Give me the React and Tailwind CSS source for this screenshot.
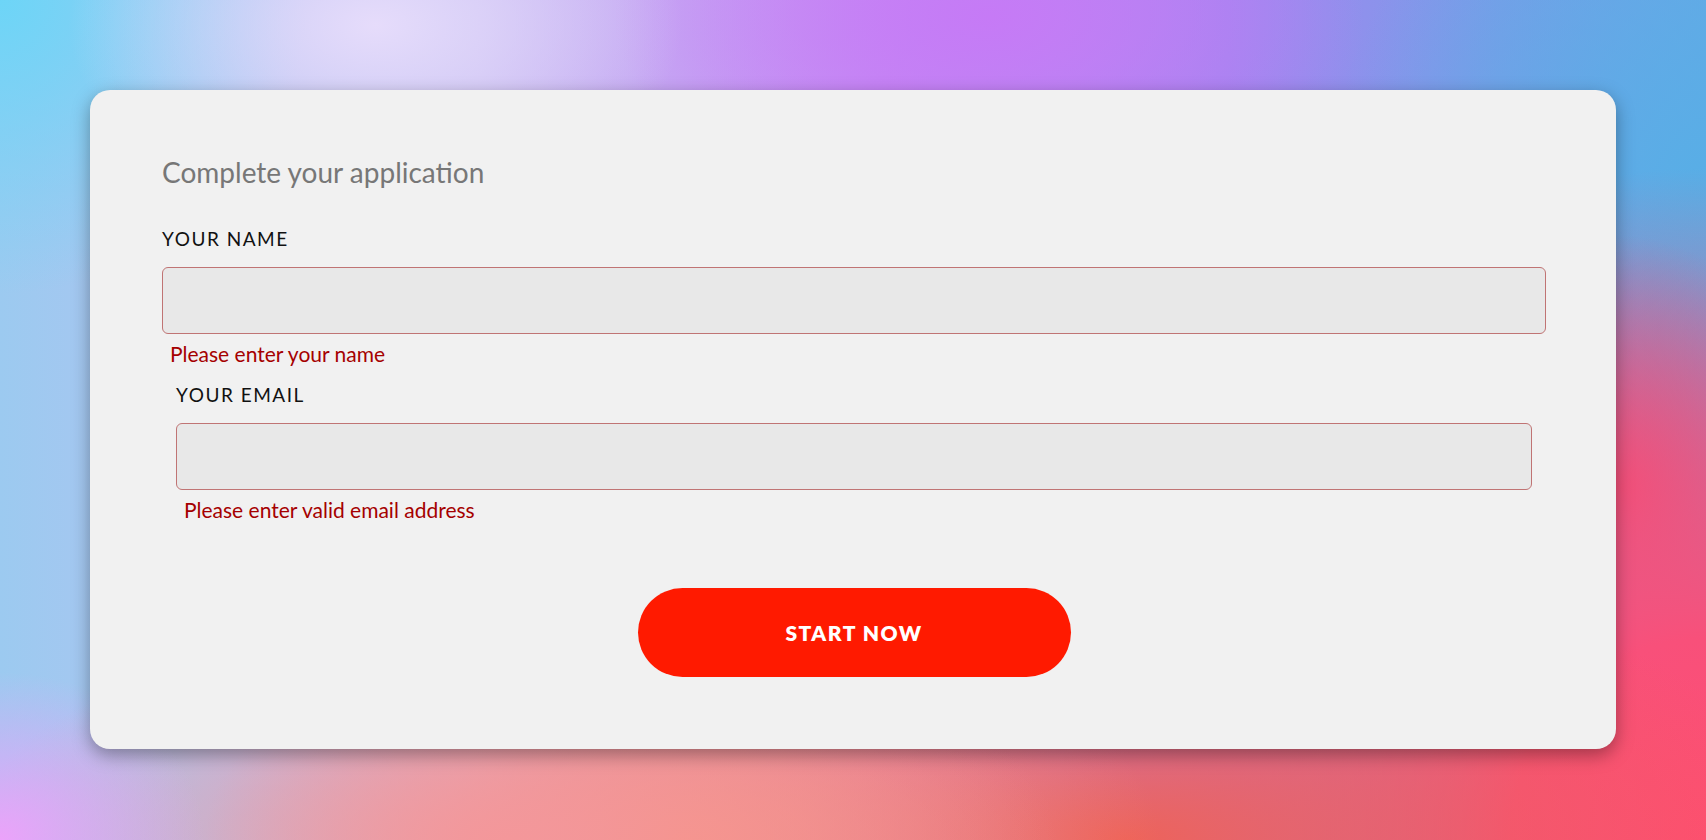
import { useState } from "react";

const Field = ({ label, value, onChange, error, type = "text" }) => {
    return (
        <div className="flex flex-col">
            <label className="text-[19px] leading-[24px] tracking-[0.08em] text-[#111] uppercase">{label}</label>
            <input
                type={type}
                value={value}
                onChange={onChange}
                className="mt-4 h-[67px] w-full rounded-[6px] border border-[#c07474] bg-[#e8e8e8] px-4 text-[20px] outline-none"
            />
            <p className="mt-[7px] pl-2 text-[21px] leading-[26px] text-[#a50000]">{error}</p>
        </div>
    );
};

export default function App() {
    const [name, setName] = useState('');
    const [email, setEmail] = useState('');

    const handleClick = (event) => {
        event.preventDefault();
    };

    return (
        <div className="min-h-screen p-[90px] font-['Lato','Liberation_Sans',sans-serif] bg-[radial-gradient(ellipse_12%_20%_at_0%_100%,#eca2fa_0%,rgba(236,162,250,0)_100%),radial-gradient(ellipse_32%_26%_at_30%_100%,#f4979a_0%,rgba(244,151,154,0)_100%),radial-gradient(ellipse_28%_28%_at_40%_100%,#f8907a_0%,rgba(248,144,122,0)_100%),radial-gradient(ellipse_40%_34%_at_66%_100%,#ee6258_0%,rgba(238,98,88,0)_100%),radial-gradient(ellipse_38%_80%_at_100%_100%,#ff4d72_0%,#f8507a_30%,rgba(248,80,122,0)_100%),radial-gradient(ellipse_12%_30%_at_95%_58%,#e84e78_0%,rgba(232,78,120,0)_100%),radial-gradient(ellipse_18%_22%_at_22%_3%,#e6dcfb_0%,rgba(230,220,251,0)_100%),radial-gradient(ellipse_22%_24%_at_58%_2%,#c67af6_0%,rgba(198,122,246,0)_100%),radial-gradient(ellipse_22%_45%_at_100%_22%,#58aee6_0%,rgba(88,174,230,0)_100%),radial-gradient(ellipse_18%_35%_at_0%_0%,#6dd5f7_0%,rgba(109,213,247,0)_100%),linear-gradient(90deg,#9ccaf0_0%,#c6bcf2_28%,#c48cf4_52%,#a286f0_72%,#7a9ce8_88%,#68a8e6_100%)]">
            <form className="flex flex-col rounded-[20px] bg-[#f1f1f1] pl-[72px] pr-[70px] pt-[66px] pb-[72px] shadow-[0_6px_18px_rgba(0,0,0,0.35)]">
                <h2 className="text-[28px] leading-[32px] text-[#777]">Complete your application</h2>
                <div className="mt-[39px]">
                    <Field
                        label="Your name"
                        value={name}
                        onChange={e => setName(e.target.value)}
                        error="Please enter your name"
                    />
                </div>
                <div className="mx-[14px] mt-4">
                    <Field
                        label="Your email"
                        type="email"
                        value={email}
                        onChange={e => setEmail(e.target.value)}
                        error="Please enter valid email address"
                    />
                </div>
                <button
                    type="submit"
                    onClick={handleClick}
                    className="mx-auto mt-[65px] h-[89px] w-[433px] rounded-full bg-[#ff1a00] text-[21px] font-extrabold tracking-[0.07em] text-white"
                >
                    START NOW
                </button>
            </form>
        </div>
    );
}
